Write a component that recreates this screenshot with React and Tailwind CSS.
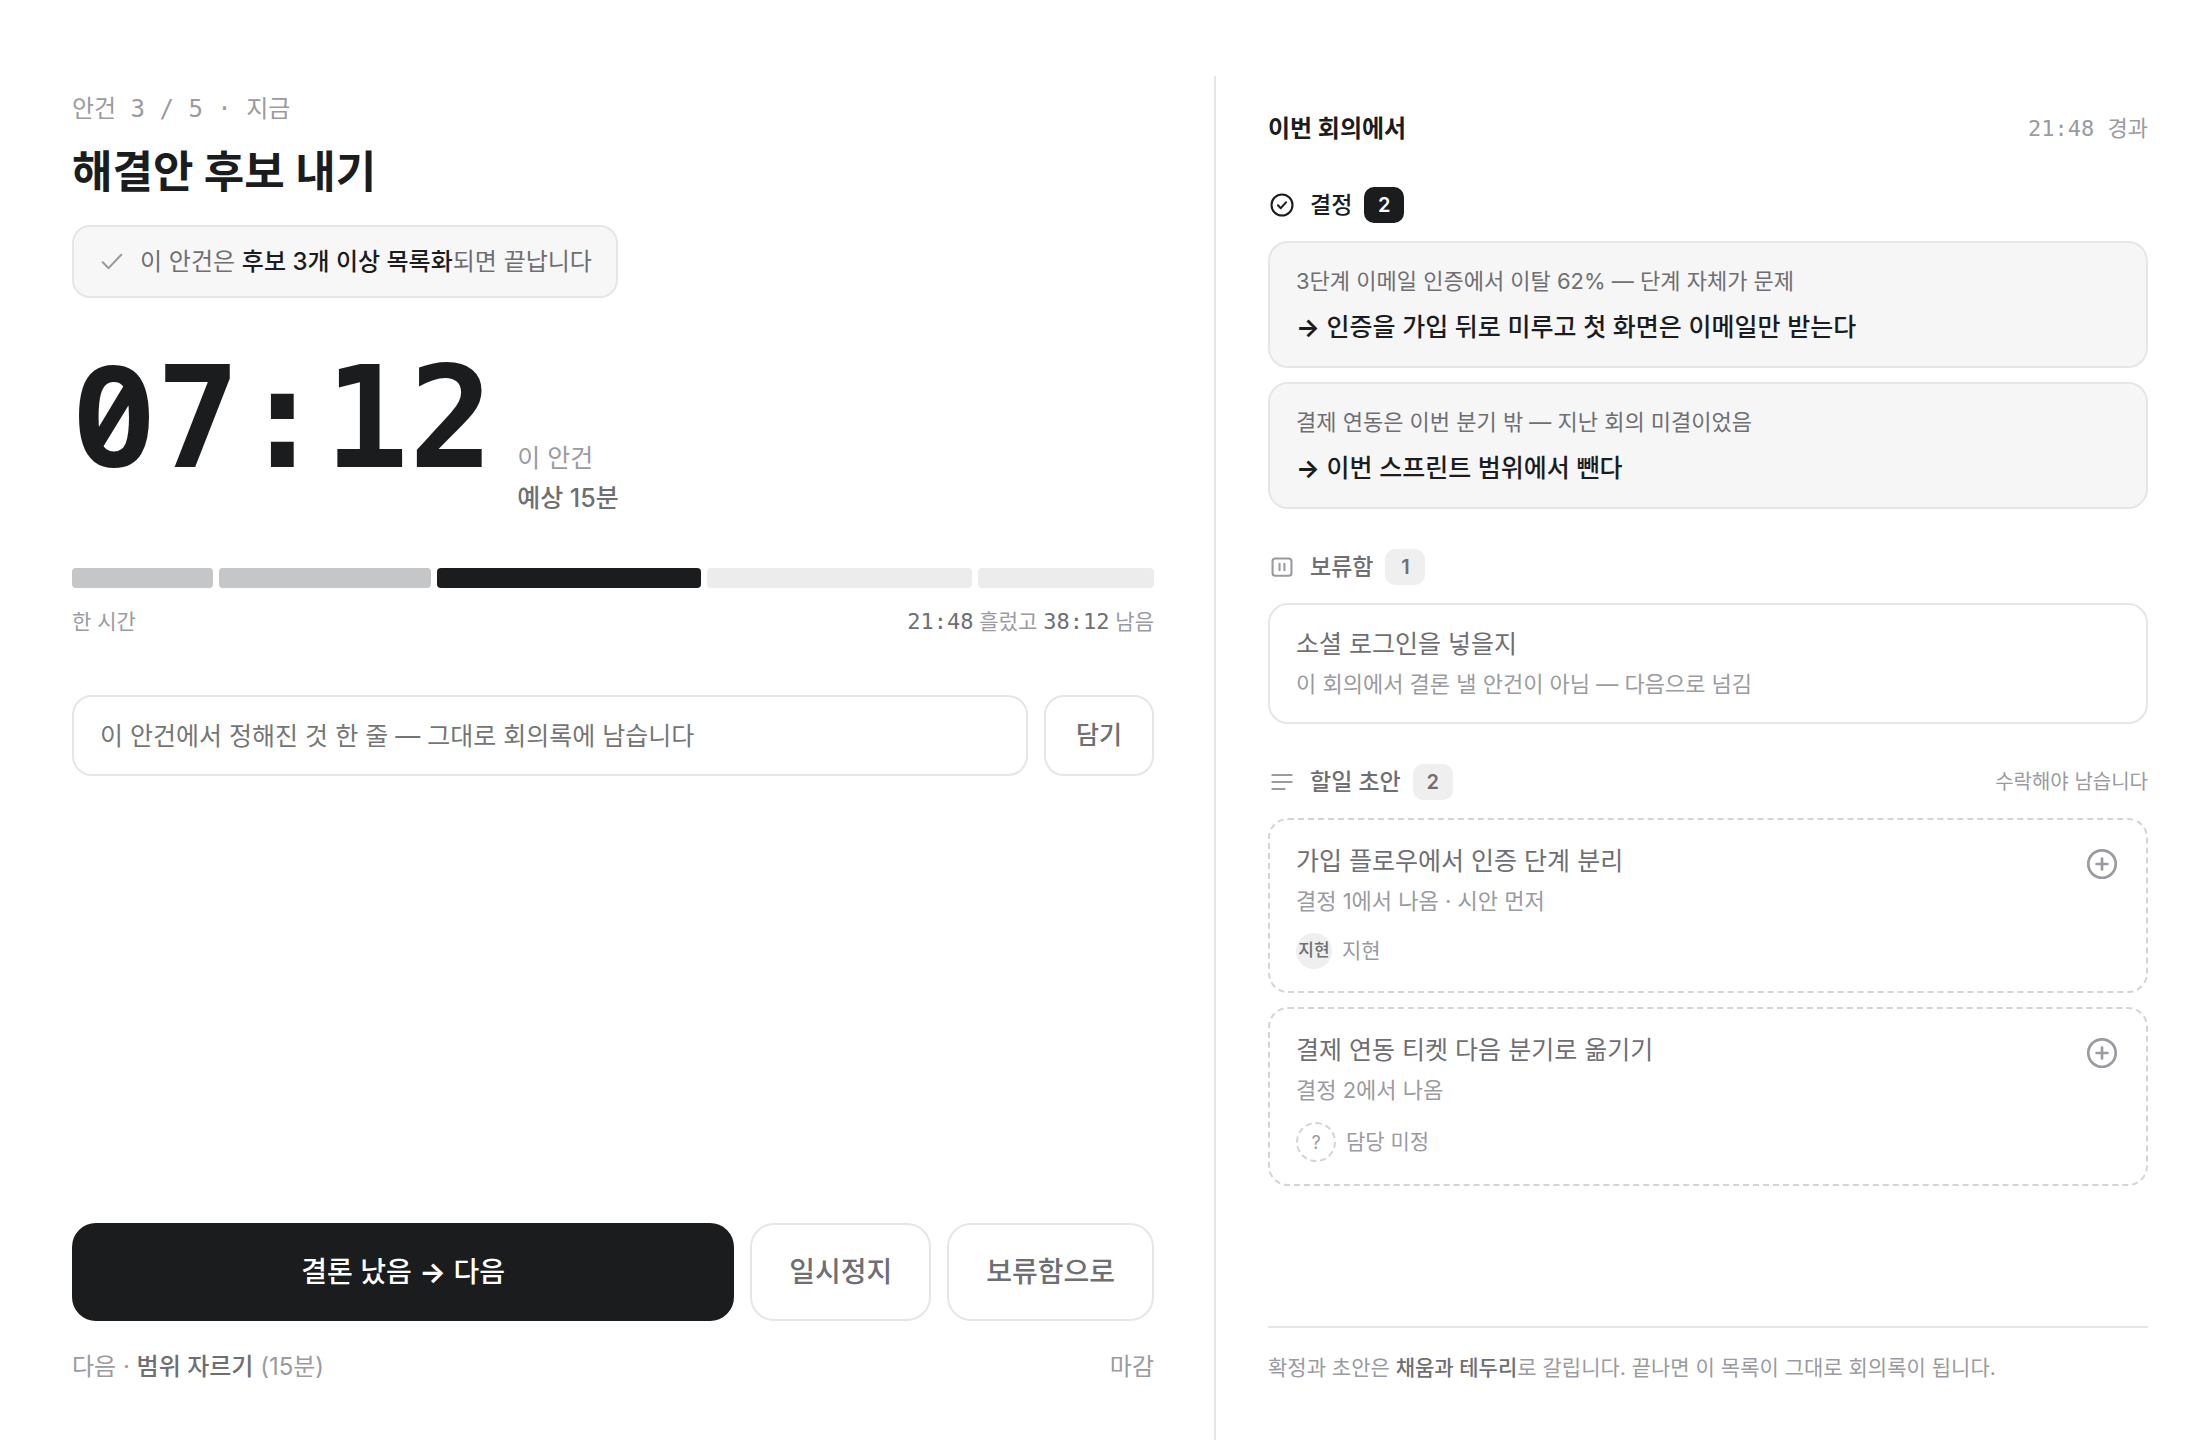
import React, { useState } from 'react';

const SANS = "font-['Inter','Noto_Sans_CJK_KR',sans-serif]";
const MONO = "font-['DejaVu_Sans_Mono','Noto_Sans_CJK_KR',monospace]";
const SLASHED = "font-['Noto_Sans_Mono','DejaVu_Sans_Mono',monospace]";

// minutes per agenda item, 60 in total
const agenda = [
    { id: 1, minutes: 8, state: 'done' },
    { id: 2, minutes: 12, state: 'done' },
    { id: 3, minutes: 15, state: 'now' },
    { id: 4, minutes: 15, state: 'next' },
    { id: 5, minutes: 10, state: 'next' },
];

const segmentColor = {
    done: 'bg-[#c5c6c8]',
    now: 'bg-[#1b1c1e]',
    next: 'bg-[#ececec]',
};

const decisions = [
    { id: 1, context: '3단계 이메일 인증에서 이탈 62% — 단계 자체가 문제', result: '인증을 가입 뒤로 미루고 첫 화면은 이메일만 받는다' },
    { id: 2, context: '결제 연동은 이번 분기 밖 — 지난 회의 미결이었음', result: '이번 스프린트 범위에서 뺀다' },
];

const parked = [
    { id: 1, title: '소셜 로그인을 넣을지', note: '이 회의에서 결론 낼 안건이 아님 — 다음으로 넘김' },
];

const drafts = [
    { id: 1, title: '가입 플로우에서 인증 단계 분리', note: '결정 1에서 나옴 · 시안 먼저', owner: '지현' },
    { id: 2, title: '결제 연동 티켓 다음 분기로 옮기기', note: '결정 2에서 나옴', owner: null },
];

function Icon({ className, width = 1.2, children }) {
    return (
        <svg
            viewBox="0 0 16 16"
            fill="none"
            stroke="currentColor"
            strokeWidth={width}
            strokeLinecap="round"
            strokeLinejoin="round"
            aria-hidden="true"
            className={`shrink-0 ${className}`}
        >
            {children}
        </svg>
    );
}

// Big clock, zeros are set in a face with a slashed zero
function Clock({ value }) {
    return (
        <time className={`text-[140px] leading-[140px] font-bold ${MONO}`}>
            {value.split(/(0)/).map((part, i) => (part === '0' ? <span key={i} className={SLASHED}>0</span> : part))}
        </time>
    );
}

function SectionHeader({ icon, label, count, strong, hint }) {
    return (
        <div className="flex items-center">
            <span className={strong ? 'text-[#1b1c1e]' : 'text-[#9a9aa0]'}>{icon}</span>
            <h3 className={`ml-3.5 text-[23px] leading-8 font-medium ${strong ? 'text-[#1b1c1e]' : 'text-[#6e6e73]'}`}>
                {label}
            </h3>
            <span
                className={`ml-3 flex h-9 w-10 items-center justify-center rounded-[10px] text-[20px] font-semibold ${
                    strong ? 'bg-[#1b1c1e] text-white' : 'bg-[#efefef] text-[#6e6e73]'
                }`}
            >
                {count}
            </span>
            {hint && <span className="ml-auto text-[20px] leading-8 text-[#9a9aa0]">{hint}</span>}
        </div>
    );
}

function Owner({ name }) {
    if (!name) {
        return (
            <div className="mt-3 flex items-center gap-2.5 text-[21px] text-[#9a9aa0]">
                <span className="flex size-10 items-center justify-center rounded-full border-2 border-dashed border-[#d4d4d6] text-[18px]">?</span>
                담당 미정
            </div>
        );
    }
    return (
        <div className="mt-3 flex items-center gap-2.5 text-[21px] text-[#9a9aa0]">
            <span className="flex size-9 items-center justify-center rounded-full bg-[#efefef] text-[17px] font-medium whitespace-nowrap text-[#6e6e73]">
                {name}
            </span>
            {name}
        </div>
    );
}

function CurrentAgenda() {
    const [line, setLine] = useState('');

    return (
        <main className="flex flex-col border-r-2 border-[#e6e6e6] pr-[60px] pb-[55px] pl-[72px] pt-[17px]">
            <p className={`text-[24px] leading-8 text-[#9a9aa0] ${MONO}`}>안건 3 / 5 · 지금</p>
            <h1 className="mt-3.5 text-[44px] leading-[66px] font-bold">해결안 후보 내기</h1>

            <div className="mt-5 flex h-[73px] items-center gap-3.5 self-start rounded-[18px] border-2 border-[#e6e6e6] bg-[#f7f7f7] px-6">
                <Icon className="size-7 text-[#9a9aa0]">
                    <path d="M2.7 8.2 6 11.5l7.3-7.6" />
                </Icon>
                <p className="text-[24px] leading-9 text-[#6e6e73]">
                    이 안건은 <b className="font-medium text-[#1b1c1e]">후보 3개 이상 목록화</b>되면 끝납니다
                </p>
            </div>

            <div className="mt-[45px] flex items-baseline gap-6">
                <Clock value="07:12" />
                <p className="text-[25px] leading-10 text-[#9a9aa0]">
                    이 안건
                    <br />
                    <b className="font-medium text-[#6e6e73]">예상 15분</b>
                </p>
            </div>

            <div className="mt-[50px] flex gap-1.5">
                {agenda.map(item => (
                    <div
                        key={item.id}
                        className={`h-5 rounded-[4px] ${segmentColor[item.state]}`}
                        style={{ flex: `${item.minutes} 1 0%` }}
                    />
                ))}
            </div>
            <div className="mt-4 flex justify-between text-[21px] leading-9 text-[#9a9aa0]">
                <span>한 시간</span>
                <span>
                    <span className={`text-[22px] text-[#6e6e73] ${MONO}`}>21:48</span> 흘렀고{' '}
                    <span className={`text-[22px] text-[#6e6e73] ${MONO}`}>38:12</span> 남음
                </span>
            </div>

            <form className="mt-[55px] flex gap-4" onSubmit={e => e.preventDefault()}>
                <input
                    type="text"
                    aria-label="정해진 것"
                    value={line}
                    onChange={e => setLine(e.target.value)}
                    placeholder="이 안건에서 정해진 것 한 줄 — 그대로 회의록에 남습니다"
                    className="h-[81px] min-w-0 flex-1 rounded-[20px] border-2 border-[#e6e6e6] bg-white px-[26px] text-[25px] placeholder:text-[#757575]"
                />
                <button type="submit" className="rounded-[20px] border-2 border-[#e6e6e6] px-[30px] text-[25px] font-medium text-[#6e6e73]">
                    담기
                </button>
            </form>

            <div className="mt-auto flex gap-4">
                <button type="button" className="h-[98px] flex-1 rounded-3xl bg-[#1b1c1e] text-[28px] font-medium text-white">
                    결론 났음 <span className="font-bold">→</span> 다음
                </button>
                <button type="button" className="rounded-3xl border-2 border-[#e6e6e6] px-[37px] text-[28px] font-medium text-[#6e6e73]">
                    일시정지
                </button>
                <button type="button" className="rounded-3xl border-2 border-[#e6e6e6] px-[37px] text-[28px] font-medium text-[#6e6e73]">
                    보류함으로
                </button>
            </div>
            <div className="mt-7 flex justify-between text-[24px] leading-9 text-[#9a9aa0]">
                <p>
                    다음 · <b className="font-medium text-[#6e6e73]">범위 자르기</b> (15분)
                </p>
                <button type="button">마감</button>
            </div>
        </main>
    );
}

function MeetingLog() {
    return (
        <aside className="flex flex-col px-[52px] pt-[33px] pb-[54px]">
            <header className="flex items-center justify-between">
                <h2 className="text-[24px] leading-10 font-bold">이번 회의에서</h2>
                <span className={`text-[22px] leading-10 text-[#9a9aa0] ${MONO}`}>21:48 경과</span>
            </header>

            <section className="mt-[38px]">
                <SectionHeader
                    strong
                    label="결정"
                    count={decisions.length}
                    icon={
                        <Icon className="size-7">
                            <circle cx="8" cy="8" r="6" />
                            <path d="M5.7 8.2l1.6 1.6 3-3.3" />
                        </Icon>
                    }
                />
                <ul className="mt-[18px] space-y-3.5">
                    {decisions.map(item => (
                        <li key={item.id} className="rounded-[20px] border-2 border-[#e6e6e6] bg-[#f6f6f6] px-[26px] pt-5 pb-[19px]">
                            <p className="text-[22px] leading-9 text-[#6e6e73]">{item.context}</p>
                            <p className="mt-2 text-[25px] leading-10 font-medium">
                                <span className="font-bold">→</span> {item.result}
                            </p>
                        </li>
                    ))}
                </ul>
            </section>

            <section className="mt-10">
                <SectionHeader
                    label="보류함"
                    count={parked.length}
                    icon={
                        <Icon className="size-7">
                            <rect x="2.6" y="3.1" width="10.8" height="9.9" rx="1.6" />
                            <path d="M6.6 6.2v3.6M9.4 6.2v3.6" />
                        </Icon>
                    }
                />
                <ul className="mt-[18px] space-y-3.5">
                    {parked.map(item => (
                        <li key={item.id} className="rounded-[20px] border-2 border-[#e6e6e6] px-[26px] pt-[19px] pb-[18px]">
                            <p className="text-[25px] leading-10 text-[#6e6e73]">{item.title}</p>
                            <p className="text-[22px] leading-10 text-[#9a9aa0]">{item.note}</p>
                        </li>
                    ))}
                </ul>
            </section>

            <section className="mt-10">
                <SectionHeader
                    label="할일 초안"
                    count={drafts.length}
                    hint="수락해야 남습니다"
                    icon={
                        <Icon className="size-7">
                            <path d="M2.5 4h11M2.5 8h11M2.5 12h7" />
                        </Icon>
                    }
                />
                <ul className="mt-[18px] space-y-3.5">
                    {drafts.map(item => (
                        <li
                            key={item.id}
                            className="flex items-start justify-between rounded-[20px] border-2 border-dashed border-[#d4d4d6] px-[26px] pt-[21px] pb-[22px]"
                        >
                            <div>
                                <p className="text-[25px] leading-10 text-[#6e6e73]">{item.title}</p>
                                <p className="text-[22px] leading-10 text-[#9a9aa0]">{item.note}</p>
                                <Owner name={item.owner} />
                            </div>
                            <button type="button" aria-label="수락" className="mt-[5px] text-[#9a9aa0]">
                                <Icon className="size-9">
                                    <circle cx="8" cy="8" r="6.1" />
                                    <path d="M8 5.6v4.8M5.6 8h4.8" />
                                </Icon>
                            </button>
                        </li>
                    ))}
                </ul>
            </section>

            <footer className="mt-auto border-t-2 border-[#e6e6e6] pt-[22px] text-[21px] leading-9 text-[#9a9aa0]">
                확정과 초안은 <b className="font-medium text-[#6e6e73]">채움과 테두리</b>로 갈립니다. 끝나면 이 목록이 그대로 회의록이 됩니다.
            </footer>
        </aside>
    );
}

export default function App() {
    return (
        <div className={`flex min-h-screen flex-col bg-white pt-[76px] text-[#1b1c1e] ${SANS}`}>
            <div className="grid flex-1 grid-cols-[152fr_123fr]">
                <CurrentAgenda />
                <MeetingLog />
            </div>
        </div>
    );
}
